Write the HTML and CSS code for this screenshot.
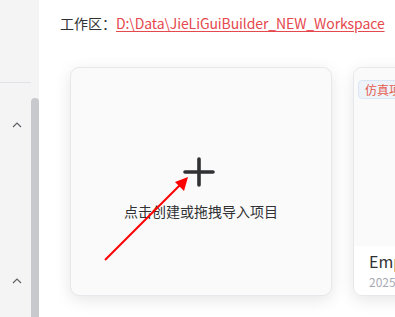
FILE: index.html
```html
<!DOCTYPE html>
<html lang="zh">
<head>
<meta charset="utf-8">
<link rel="stylesheet" href="styles.css">
</head>
<body>
<div class="app">
  <aside class="sidebar">
    <div class="nav">
      <div class="nav-top"></div>
      <div class="nav-item first">
        <svg class="chev" width="10" height="6" viewBox="0 0 10 6"><polyline points="1,5 5,1 9,5" fill="none" stroke="#606266" stroke-width="1.2"/></svg>
      </div>
      <div class="nav-item second">
        <svg class="chev" width="10" height="6" viewBox="0 0 10 6"><polyline points="1,5 5,1 9,5" fill="none" stroke="#606266" stroke-width="1.2"/></svg>
      </div>
    </div>
    <div class="scroll-track"><div class="scroll-thumb"></div></div>
  </aside>
  <main class="main">
    <div class="workspace">
      <span class="label">工作区：</span><a class="path">D:\Data\JieLiGuiBuilder_NEW_Workspace</a>
    </div>
    <div class="cards">
      <div class="card create">
        <svg class="plus" width="32" height="30" viewBox="0 0 32 30"><path d="M16 2 V28 M2 15 H30" stroke="#303133" stroke-width="3.6" stroke-linecap="round" fill="none"/></svg>
        <div class="create-text">点击创建或拖拽导入项目</div>
      </div>
      <div class="card project">
        <div class="thumb"><span class="tag">仿真项目</span></div>
        <div class="info">
          <div class="name">EmptyProject</div>
          <div class="date">2025-01-01 12:00</div>
        </div>
      </div>
    </div>
  </main>
  <svg class="arrow" width="395" height="317" viewBox="0 0 395 317">
    <line x1="105" y1="260" x2="180" y2="185" stroke="#ff0000" stroke-width="2"/>
    <polygon points="188,177 175,182 184,191" fill="#ff0000"/>
  </svg>
</div>
</body>
</html>
```
FILE: styles.css
```css
* { box-sizing: border-box; }
html, body { margin: 0; padding: 0; }
body {
  font-family: "Noto Sans CJK SC", "Noto Sans", sans-serif;
  background: #ffffff;
  color: #303133;
}
.app {
  position: relative;
  display: flex;
  width: 395px;
  height: 317px;
  overflow: hidden;
}
.sidebar {
  display: flex;
  flex: 0 0 39px;
  background: #f4f4f5;
}
.nav {
  flex: 0 0 31px;
  display: flex;
  flex-direction: column;
}
.nav-top {
  height: 83px;
  border-bottom: 1px solid #e0e2e7;
}
.nav-item {
  display: flex;
  justify-content: center;
  padding-left: 2px;
}
.nav-item.first { margin-top: 39px; }
.nav-item.second { margin-top: 150px; }
.scroll-track {
  flex: 0 0 8px;
  padding-top: 98px;
}
.scroll-thumb {
  height: 240px;
  background: #c8c9cc;
  border-radius: 4px 4px 0 0;
}
.main {
  flex: 1;
  min-width: 0;
  padding: 12px 0 0 21px;
  overflow: hidden;
}
.workspace {
  font-size: 14px;
  line-height: 22px;
  white-space: nowrap;
}
.label { color: #303133; }
.path {
  color: #e5484d;
  text-decoration: underline;
  text-underline-offset: 2px;
  letter-spacing: -0.1px;
}
.cards {
  display: flex;
  gap: 21px;
  margin-top: 33px;
  padding-left: 10px;
}
.card {
  flex: 0 0 262px;
  height: 229px;
  border: 1px solid #e6e8eb;
  border-radius: 9px;
  background: #fafafa;
  box-shadow: 0 4px 16px rgba(0, 0, 0, 0.1);
  overflow: hidden;
}
.create {
  display: flex;
  flex-direction: column;
  align-items: center;
  padding-top: 89px;
}
.plus { margin-left: -4px; }
.create-text {
  margin-top: 14px;
  font-size: 14px;
  line-height: 20px;
  color: #303133;
}
.project {
  display: flex;
  flex-direction: column;
}
.thumb {
  height: 178px;
  background: #fafafa;
  padding: 8px 0 0 4px;
}
.tag {
  display: inline-block;
  padding: 0 6px;
  height: 19px;
  line-height: 17px;
  font-size: 12px;
  color: #e55a4a;
  background: #eef3fa;
  border: 1px solid #dbe6f5;
  border-radius: 4px;
  white-space: nowrap;
}
.info {
  flex: 1;
  background: #ffffff;
  padding: 4px 0 0 15px;
  white-space: nowrap;
}
.name {
  font-size: 16px;
  line-height: 22px;
  color: #303133;
}
.date {
  font-size: 12px;
  line-height: 20px;
  color: #a8abb2;
}
.arrow {
  position: absolute;
  left: 0;
  top: 0;
  pointer-events: none;
}
```
